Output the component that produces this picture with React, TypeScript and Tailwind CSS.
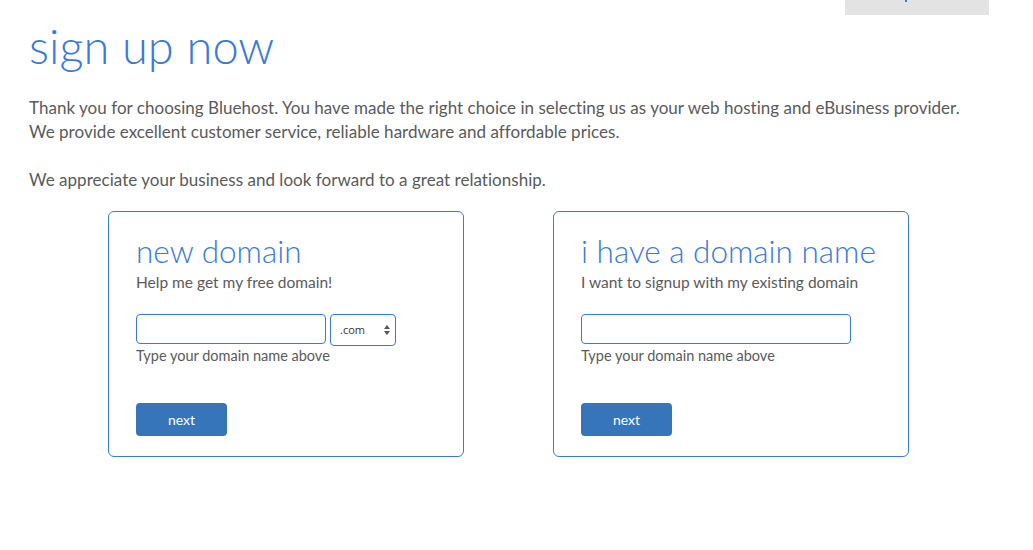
import React from "react";

function Card({
  title,
  subtitle,
  withSelect,
}: {
  title: string;
  subtitle: string;
  withSelect?: boolean;
}) {
  return (
    <div className="w-[356px] h-[246px] border border-[#3a7bd5] rounded-[6px] pl-[27px] pt-[20px]">
      <div className="text-[31.5px] leading-[38px] text-[#3a7bd5] font-light">
        {title}
      </div>
      <div className="text-[15.5px] leading-[20px] text-[#5a5a5a] mt-[2px]">{subtitle}</div>
      <div className="flex items-start gap-[4px] mt-[22px] h-[30px]">
        <input
          type="text"
          className={`${withSelect ? "w-[190px]" : "w-[270px]"} h-[30px] border border-[#3a7bd5] rounded-[4px] outline-none`}
        />
        {withSelect && (
          <div className="w-[66px] h-[32px] border border-[#3a7bd5] rounded-[4px] flex items-center justify-between pl-[9px] pr-[5px]">
            <span className="text-[11px] text-[#333] font-['Open_Sans',sans-serif]">.com</span>
            <svg width="6" height="10" viewBox="0 0 6 10">
              <path d="M0 4 L3 0 L6 4 Z" fill="#555" />
              <path d="M0 6 L3 10 L6 6 Z" fill="#555" />
            </svg>
          </div>
        )}
      </div>
      <div className="text-[14.5px] leading-[20px] text-[#5a5a5a] mt-[2px]">
        Type your domain name above
      </div>
      <button className="mt-[37px] w-[91px] h-[33px] bg-[#3775bb] rounded-[4px] text-white text-[14px] flex items-center justify-center">
        next
      </button>
    </div>
  );
}

export default function App() {
  return (
    <div className="relative w-[1033px] h-[550px] bg-white font-['Lato',sans-serif] overflow-hidden">
      <div className="absolute left-[845px] top-0 w-[144px] h-[15px] bg-[#e3e3e3]">
        <div className="absolute left-[60px] top-0 w-[2px] h-[2px] bg-[#3a7bd5]" />
      </div>
      <div className="pl-[29px] pt-[18px]">
        <h1 className="text-[47px] leading-[56px] text-[#3a7bd5] font-light">sign up now</h1>
        <div className="mt-[22px] text-[17px] leading-[24px] text-[#5a5a5a] tracking-[0.03px]">
          <p>
            Thank you for choosing Bluehost. You have made the right choice in selecting us as your web hosting and eBusiness provider.
          </p>
          <p>We provide excellent customer service, reliable hardware and affordable prices.</p>
          <p className="mt-[24px]">We appreciate your business and look forward to a great relationship.</p>
        </div>
      </div>
      <div className="flex gap-[89px] pl-[108px] mt-[19px]">
        <Card title="new domain" subtitle="Help me get my free domain!" withSelect />
        <Card title="i have a domain name" subtitle="I want to signup with my existing domain" />
      </div>
    </div>
  );
}
